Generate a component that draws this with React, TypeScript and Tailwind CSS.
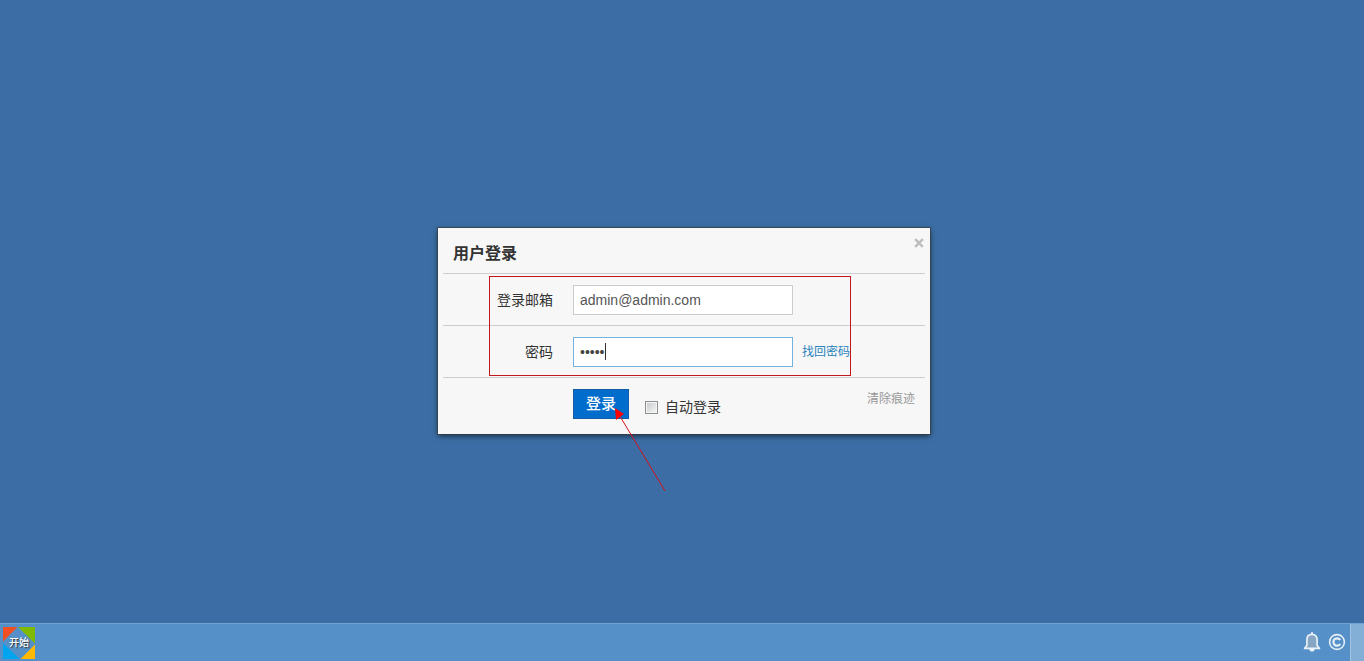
import React, { useState } from 'react';
import type { ReactNode } from 'react';

interface FieldRowProps {
  id: string;
  label: string;
  children: ReactNode;
}

const FieldRow = ({ id, label, children }: FieldRowProps) => {
  return (
    <div className="flex items-center gap-5 border-b border-[#cccccc] pt-[11px] pb-[10px]">
      <label htmlFor={id} className="w-[110px] text-right">
        {label}
      </label>
      {children}
    </div>
  );
};

const LoginDialog = () => {
  const [email, setEmail] = useState('admin@admin.com');
  const [password, setPassword] = useState('admin');
  const [remember, setRemember] = useState(false);

  return (
    <form
      className="relative w-[492px] bg-[#f7f7f7] px-[5px] pb-[15px] text-sm text-[#333333] shadow-[0_0_0_1px_rgba(60,60,60,0.7),0_2px_6px_rgba(0,0,0,0.6)]"
      onSubmit={(e) => e.preventDefault()}
    >
      <button
        type="button"
        aria-label="关闭"
        className="absolute top-[10px] right-[6px] flex h-[10px] w-[10px] items-center justify-center"
      >
        <svg viewBox="0 0 10 10" className="h-[10px] w-[10px]">
          <path d="M1.2 1.2l7.6 7.6M8.8 1.2l-7.6 7.6" stroke="#bdbdbd" strokeWidth="2.4" />
        </svg>
      </button>

      <h1 className="border-b border-[#cccccc] px-[10px] pt-[14px] pb-[7px] text-base font-bold">
        用户登录
      </h1>

      <FieldRow id="email" label="登录邮箱">
        <input
          id="email"
          type="text"
          value={email}
          onChange={(e) => setEmail(e.target.value)}
          className="h-[30px] w-[220px] border border-[#cccccc] bg-white px-[6px] text-[#555555] outline-none"
        />
      </FieldRow>

      <FieldRow id="password" label="密码">
        <div className="relative">
          <input
            id="password"
            type="password"
            value={password}
            onChange={(e) => setPassword(e.target.value)}
            className="block h-[30px] w-[220px] border border-[#74b3e0] bg-white px-[6px] text-[#444444] outline-none"
          />
          <span className="absolute top-[6px] left-8 h-[17px] w-px bg-[#333333]" />
        </div>
        <a href="#" className="-ml-[11px] text-xs text-[#2a83bb]">
          找回密码
        </a>
      </FieldRow>

      <div className="flex items-start pt-[11px] pl-[130px]">
        <button
          type="submit"
          className="h-[30px] w-14 border border-[#0b5cab] bg-[#006dcc] text-[15px] font-medium text-white"
        >
          登录
        </button>
        <label className="mt-2 ml-4 flex items-center gap-[7px]">
          <input
            type="checkbox"
            checked={remember}
            onChange={(e) => setRemember(e.target.checked)}
            className="h-[13px] w-[13px] appearance-none border border-[#8e8f8f] bg-linear-to-br from-[#c6cacd] to-[#f6f6f6] shadow-[inset_0_0_0_1px_#f4f4f4] checked:bg-[#006dcc]"
          />
          自动登录
        </label>
        <a href="#" className="mr-[10px] ml-auto text-xs leading-5 text-[#999999]">
          清除痕迹
        </a>
      </div>

      {/* Highlight box and pointer drawn over the form */}
      <div className="pointer-events-none absolute top-12 left-[51px] h-[100px] w-[362px] border border-[#c4161c]" />
      <svg
        viewBox="0 0 52 84"
        className="pointer-events-none absolute top-[180px] left-[177px] h-[84px] w-[52px]"
      >
        <path d="M3 5L50 83" stroke="#d3121c" strokeWidth="1" />
        <path d="M0 0L9 6L1 12Z" fill="#fe0000" />
      </svg>
    </form>
  );
};

const Taskbar = () => {
  return (
    <footer className="flex h-[38px] items-center border-t border-[#70a3d2] bg-[#5591c8] pl-[3px]">
      <button type="button" className="relative h-8 w-8">
        <svg viewBox="0 0 32 32" className="h-8 w-8">
          <path d="M0 0h14.5L0 14.5Z" fill="#f25022" />
          <path d="M15 0h17v16.5Z" fill="#7fba00" />
          <path d="M0 16v16h16.5Z" fill="#00a4ef" />
          <path d="M32 17.5v14.5H17.5Z" fill="#ffb900" />
        </svg>
        <span className="absolute inset-0 flex items-center justify-center text-[10px] font-medium whitespace-nowrap text-white [text-shadow:1px_1px_1px_#333]">
          开始
        </span>
      </button>

      <div className="ml-auto flex h-full items-center">
        <div className="flex items-center gap-[7px] pb-[2px]">
          <button type="button" aria-label="通知">
            <svg viewBox="0 0 18 22" className="h-[22px] w-[18px]">
              <path
                d="M9 3.4C5.7 3.4 3.9 5.6 3.9 8.6v5.9L1.6 17.4h14.8l-2.3-2.9V8.6C14.1 5.6 12.3 3.4 9 3.4Z"
                fill="#87a6c3"
                stroke="#e9f1f8"
                strokeWidth="1.7"
                strokeLinejoin="round"
              />
              <path d="M8 1.2h2v2.2H8ZM6 18h6L10.400 20.500H7.600Z" fill="#e9f1f8" />
            </svg>
          </button>
          <button type="button" aria-label="版权">
            <svg viewBox="0 0 18 18" className="h-[18px] w-[18px]" fill="none" stroke="#e4eef7">
              <circle cx="9" cy="9" r="7.4" strokeWidth="1.6" />
              <path d="M12.2 7A3.7 3.7 0 1 0 12.2 11" strokeWidth="2.2" />
            </svg>
          </button>
        </div>
        <button
          type="button"
          aria-label="显示桌面"
          className="ml-1 h-full w-[14px] border-l border-[#a3c3e1] bg-[#83aed6]"
        />
      </div>
    </footer>
  );
};

const App = () => {
  return (
    <div className="flex min-h-screen flex-col bg-[#3c6ea5] font-['Liberation_Sans','Noto_Sans_CJK_SC',sans-serif]">
      <main className="flex flex-1 items-center justify-center pt-[39px] pl-1">
        <LoginDialog />
      </main>
      <Taskbar />
    </div>
  );
};

export default App;
